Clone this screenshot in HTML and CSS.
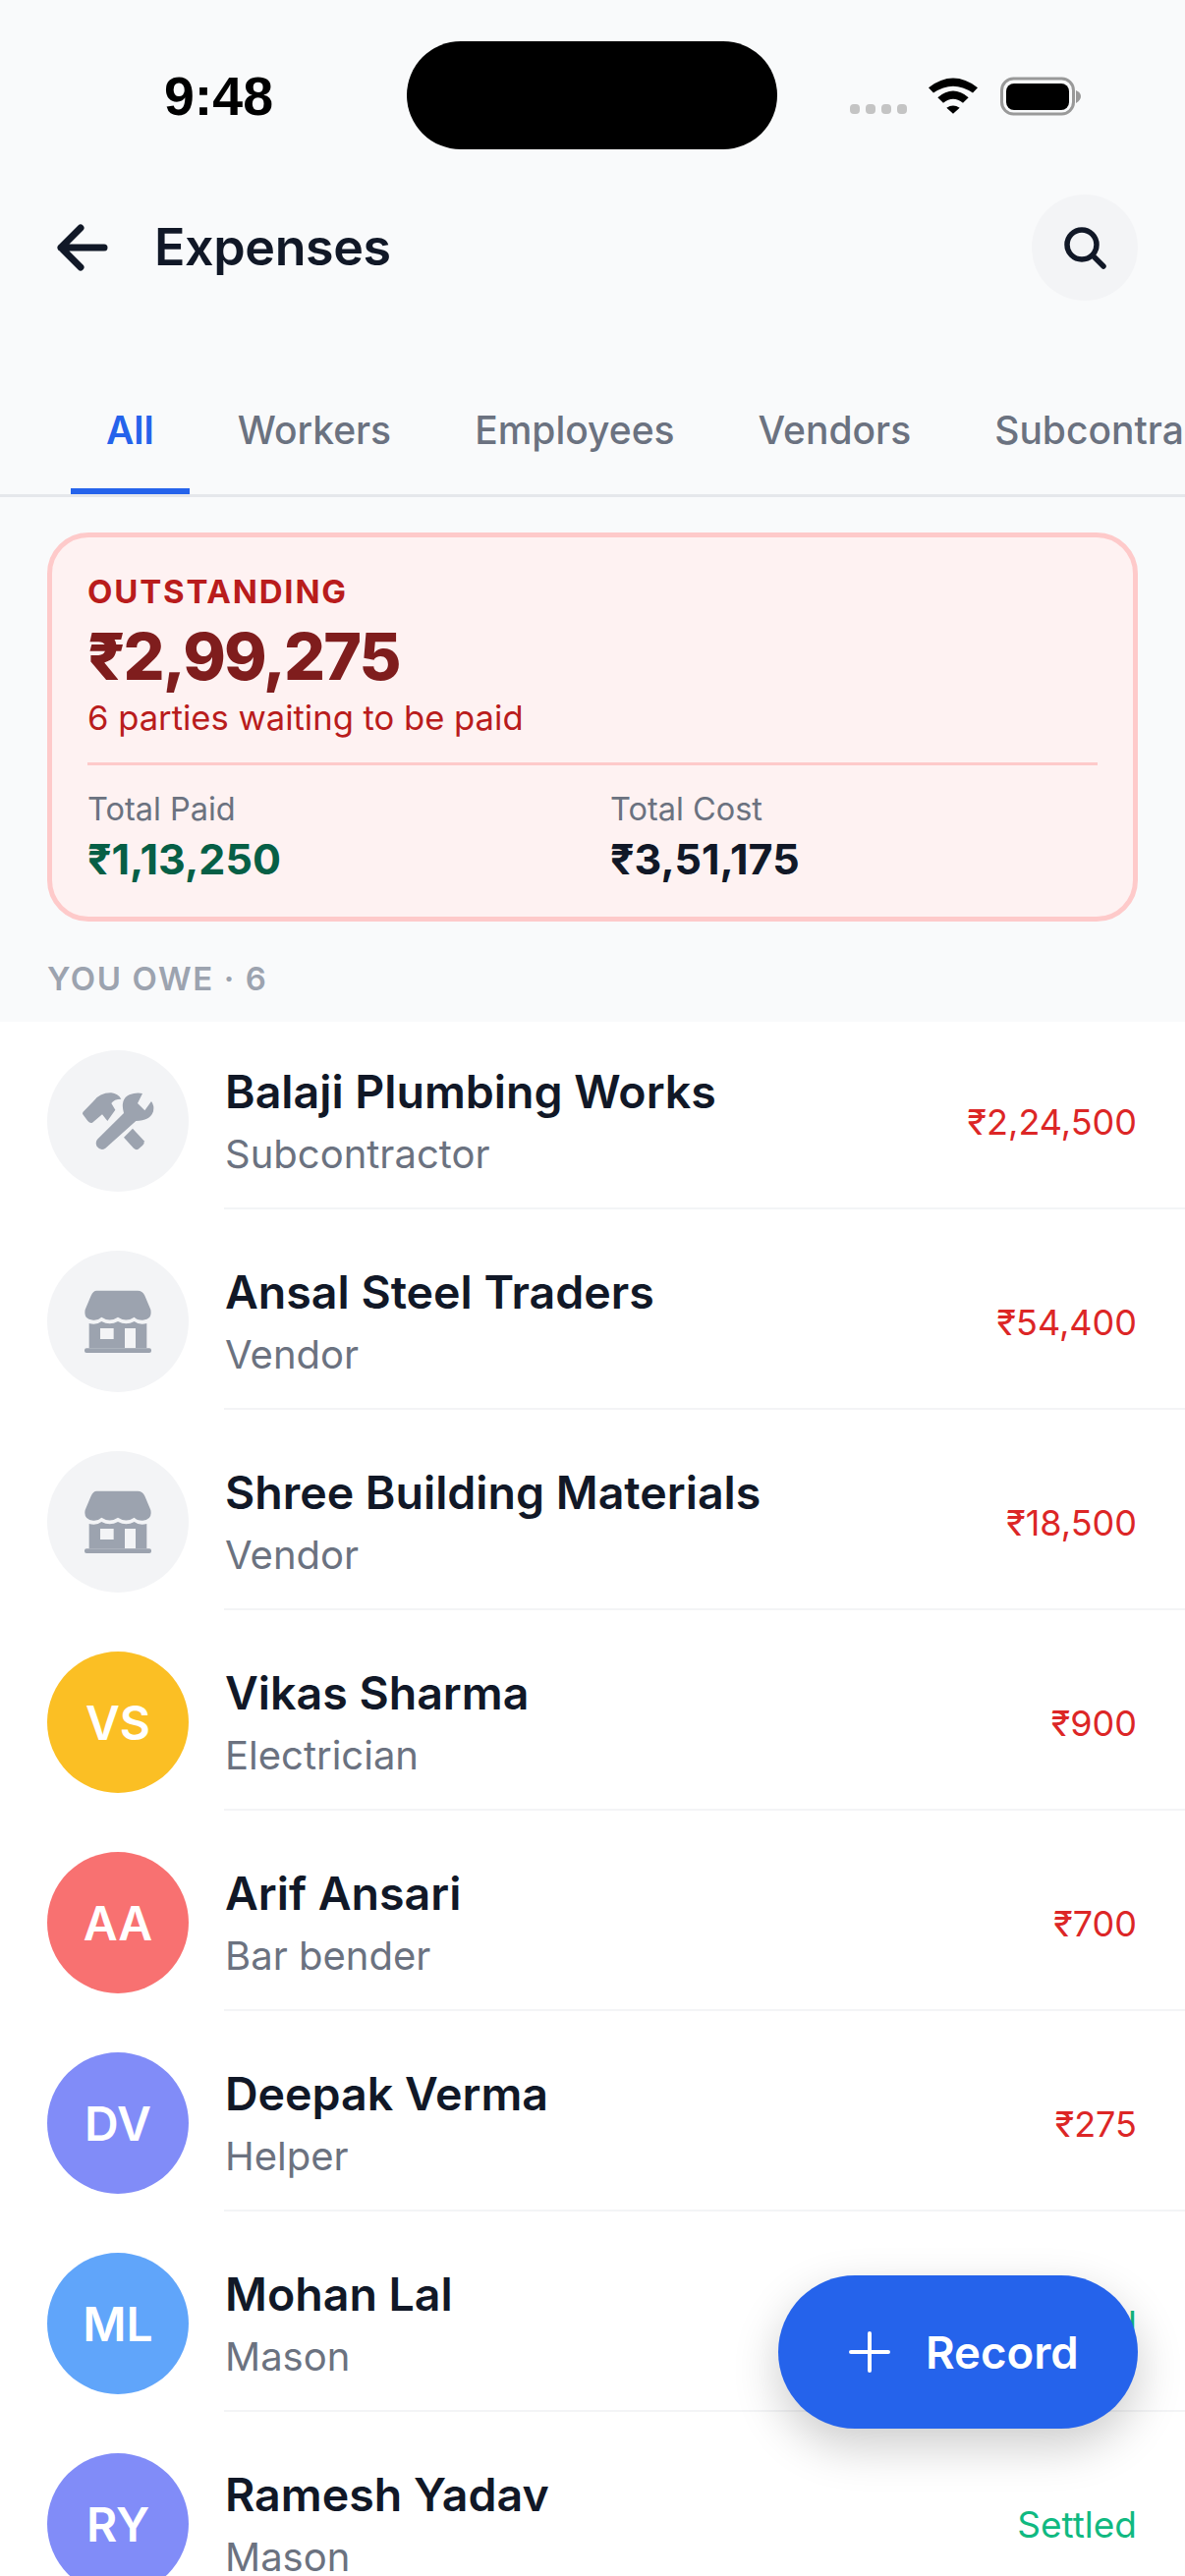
FILE: index.html
```html
<!DOCTYPE html>
<html lang="en">
<head>
<meta charset="utf-8">
<title>Expenses</title>
<link rel="stylesheet" href="styles.css">
</head>
<body>
<div class="phone">
  <div class="status">
    <span class="time">9:48</span>
    <span class="island"></span>
    <span class="indicators">
      <span class="dots"><i></i><i></i><i></i><i></i></span>
      <svg class="wifi" width="50" height="37" viewBox="0 0 150 110"><path d="M0 30Q75-28 150 30L135 46Q75 5 15 46Z"/><path d="M28 60Q75 20 122 60L105 77Q75 52 45 77Z"/><path d="M55 92Q75 78 95 92L75 110Z"/></svg>
      <svg class="battery" width="82" height="40" viewBox="0 0 82 40"><rect x="1.5" y="2" width="73" height="36" rx="12" fill="none" stroke="#999" stroke-width="3"/><rect x="6" y="7" width="64" height="27" rx="8"/><path d="M77 14Q82 16 82 20T77 27Z" fill="#999"/></svg>
    </span>
  </div>
  <header class="bar">
    <svg class="back" width="54" height="48" viewBox="0 0 54 48" fill="none" stroke="#111827" stroke-width="7" stroke-linecap="round" stroke-linejoin="round"><path d="M6 24H50M26 4L6 24L26 44"/></svg>
    <h1 class="title">Expenses</h1>
    <span class="search">
      <svg width="48" height="48" viewBox="0 0 48 48" fill="none" stroke="#111827" stroke-width="5.5" stroke-linecap="round"><circle cx="21" cy="21" r="15"/><path d="M32 32L43 43"/></svg>
    </span>
  </header>
  <nav class="tabs">
    <span class="tab active">All</span>
    <span class="tab">Workers</span>
    <span class="tab">Employees</span>
    <span class="tab">Vendors</span>
    <span class="tab">Subcontractors</span>
  </nav>
  <section class="card">
    <div class="card-label">OUTSTANDING</div>
    <div class="card-total">₹2,99,275</div>
    <div class="card-note">6 parties waiting to be paid</div>
    <div class="card-stats">
      <div class="stat"><div class="stat-label">Total Paid</div><div class="stat-value paid">₹1,13,250</div></div>
      <div class="stat"><div class="stat-label">Total Cost</div><div class="stat-value">₹3,51,175</div></div>
    </div>
  </section>
  <div class="section-title">YOU OWE · 6</div>
  <ul class="list">
    <li class="row">
      <span class="avatar icon">
        <svg width="144" height="144" viewBox="54 56 432 432"><path d="M163 245L195 212Q215 185 250 186Q270 188 280 205Q258 205 250 218L262 238L238 272L222 252L192 277Q185 280 178 272L165 255Q160 250 163 245Z"/><path d="M345 188L330 218L352 240L372 212Q382 225 378 243Q368 272 325 272L232 355Q218 365 206 350Q200 338 207 328L288 248Q276 205 305 192Q325 184 345 188Z"/><path d="M315 295L350 333Q352 340 345 347L332 358Q325 362 318 355L288 322Z"/></svg>
      </span>
      <span class="row-body">
        <span class="who"><span class="name">Balaji Plumbing Works</span><span class="role">Subcontractor</span></span>
        <span class="amt">₹2,24,500</span>
      </span>
    </li>
    <li class="row">
      <span class="avatar icon">
        <svg width="144" height="144" viewBox="54 668 432 432"><path d="M205 790H330Q345 790 352 805L370 848Q376 878 345 880Q327 880 320 871Q295 888 270 871Q245 888 220 871Q210 881 195 880Q164 878 170 848L188 805Q195 790 205 790Z"/><path fill-rule="evenodd" d="M182 890Q205 896 220 884Q245 898 270 884Q295 898 320 884Q335 896 358 890V966H182ZM216 905V938H257V905ZM291 905V965H324V905Z"/><rect x="168" y="966" width="204" height="14" rx="6"/></svg>
      </span>
      <span class="row-body">
        <span class="who"><span class="name">Ansal Steel Traders</span><span class="role">Vendor</span></span>
        <span class="amt">₹54,400</span>
      </span>
    </li>
    <li class="row">
      <span class="avatar icon">
        <svg width="144" height="144" viewBox="54 668 432 432"><path d="M205 790H330Q345 790 352 805L370 848Q376 878 345 880Q327 880 320 871Q295 888 270 871Q245 888 220 871Q210 881 195 880Q164 878 170 848L188 805Q195 790 205 790Z"/><path fill-rule="evenodd" d="M182 890Q205 896 220 884Q245 898 270 884Q295 898 320 884Q335 896 358 890V966H182ZM216 905V938H257V905ZM291 905V965H324V905Z"/><rect x="168" y="966" width="204" height="14" rx="6"/></svg>
      </span>
      <span class="row-body">
        <span class="who"><span class="name">Shree Building Materials</span><span class="role">Vendor</span></span>
        <span class="amt">₹18,500</span>
      </span>
    </li>
    <li class="row">
      <span class="avatar amber">VS</span>
      <span class="row-body">
        <span class="who"><span class="name">Vikas Sharma</span><span class="role">Electrician</span></span>
        <span class="amt">₹900</span>
      </span>
    </li>
    <li class="row">
      <span class="avatar red">AA</span>
      <span class="row-body">
        <span class="who"><span class="name">Arif Ansari</span><span class="role">Bar bender</span></span>
        <span class="amt">₹700</span>
      </span>
    </li>
    <li class="row">
      <span class="avatar indigo">DV</span>
      <span class="row-body">
        <span class="who"><span class="name">Deepak Verma</span><span class="role">Helper</span></span>
        <span class="amt">₹275</span>
      </span>
    </li>
    <li class="row">
      <span class="avatar blue">ML</span>
      <span class="row-body">
        <span class="who"><span class="name">Mohan Lal</span><span class="role">Mason</span></span>
        <span class="amt settled">Settled</span>
      </span>
    </li>
    <li class="row">
      <span class="avatar indigo">RY</span>
      <span class="row-body">
        <span class="who"><span class="name">Ramesh Yadav</span><span class="role">Mason</span></span>
        <span class="amt settled">Settled</span>
      </span>
    </li>
  </ul>
  <button class="fab">
    <svg width="42" height="42" viewBox="0 0 42 42" fill="none" stroke="#fff" stroke-width="4" stroke-linecap="round"><path d="M21 2V40M2 21H40"/></svg>
    <span>Record</span>
  </button>
</div>
</body>
</html>
```

FILE: styles.css
```css
* { box-sizing: border-box; }
html, body { margin: 0; padding: 0; }
body { font-family: Inter, "Noto Sans", sans-serif; background: #f9fafb; }
.phone { position: relative; width: 1206px; height: 2622px; overflow: hidden; background: #f9fafb; color: #111827; }

.status { display: flex; align-items: flex-start; height: 180px; padding: 42px 0 0 167px; }
.time { width: 247px; margin-top: 26px; font: 600 55.5px/60px "Liberation Sans", sans-serif; color: #000; }
.island { width: 377px; height: 110px; border-radius: 55px; background: #000; }
.indicators { display: flex; align-items: flex-end; margin: 36px 0 0 74px; }
.dots { display: flex; gap: 6px; margin-right: 22px; }
.dots i { width: 10px; height: 10px; border-radius: 4px; background: #c4c4c4; }
.wifi { margin-right: 23px; }
.battery { margin-bottom: -2px; }

.bar { display: flex; align-items: center; height: 108px; margin-top: 18px; padding: 0 48px 0 56px; }
.back { flex: none; }
.title { flex: 1; margin: 0 0 0 47px; font-size: 52px; font-weight: 600; line-height: 64px; letter-spacing: -0.4px; color: #111827; }
.search { display: flex; align-items: center; justify-content: center; width: 108px; height: 108px; border-radius: 50%; background: #f3f4f6; }

.tabs { display: flex; gap: 13px; height: 110px; margin-top: 90px; padding-left: 72px; border-bottom: 3px solid #e5e7eb; white-space: nowrap; overflow: hidden; }
.tab { flex: none; height: 107px; padding: 0 36px; font-size: 39px; font-weight: 500; line-height: 84px; color: #6b7280; }
.tab.active { color: #2563eb; font-weight: 600; border-bottom: 6px solid #2563eb; }

.card { height: 396px; margin: 36px 48px 0; padding: 37px 36px 0; border: 5px solid #fecaca; border-radius: 42px; background: #fef2f2; }
.card-label { font-size: 33px; font-weight: 700; line-height: 36px; letter-spacing: 1.8px; color: #b91c1c; }
.card-total { margin-top: 8px; font-size: 66px; font-weight: 800; line-height: 80px; letter-spacing: -1.9px; color: #7f1d1d; }
.card-note { margin-top: 1px; font-size: 34.6px; line-height: 42px; color: #b91c1c; }
.card-stats { display: grid; grid-template-columns: 1fr 1fr; column-gap: 36px; margin-top: 25px; padding-top: 26px; border-top: 3px solid #fecaca; }
.stat-label { font-size: 32.5px; line-height: 38px; color: #6b7280; }
.stat-value { margin-top: 7px; font-size: 43px; font-weight: 700; line-height: 48px; color: #111827; }
.stat-value.paid { color: #065f46; }

.section-title { height: 102px; padding: 40px 48px 0; font-size: 33px; font-weight: 600; line-height: 36px; letter-spacing: 1.6px; color: #9ca3af; }

.list { margin: 0; padding: 0; list-style: none; background: #fff; }
.row { display: flex; height: 204px; padding: 0 0 13px 48px; }
.avatar { flex: none; display: flex; align-items: center; justify-content: center; width: 144px; height: 144px; margin-top: 29px; border-radius: 50%; font-size: 48px; font-weight: 600; color: #fff; }
.avatar.icon { background: #f3f4f6; }
.avatar.icon svg { fill: #9ca3af; }
.amber { background: #fbbf24; }
.red { background: #f87171; }
.indigo { background: #818cf8; }
.blue { background: #60a5fa; }
.row-body { flex: 1; display: flex; align-items: center; justify-content: space-between; margin-left: 36px; padding: 15px 49px 0 1px; border-bottom: 2px solid #f3f4f6; }
.who { display: flex; flex-direction: column; margin-bottom: 5px; }
.name { font-size: 46.5px; font-weight: 600; line-height: 60px; color: #111827; }
.role { margin-top: 10px; font-size: 40px; line-height: 48px; color: #6b7280; }
.amt { font-size: 36px; line-height: 44px; color: #dc2626; }
.amt.settled { font-size: 37px; color: #10b981; }

.fab { position: absolute; left: 792px; top: 2316px; display: flex; align-items: center; gap: 36px; width: 366px; height: 156px; padding: 0 0 0 72px; border: 0; border-radius: 78px; background: #2563eb; box-shadow: 0 18px 48px rgba(0,0,0,.2); color: #fff; font-family: inherit; font-size: 45.5px; font-weight: 600; }
```
